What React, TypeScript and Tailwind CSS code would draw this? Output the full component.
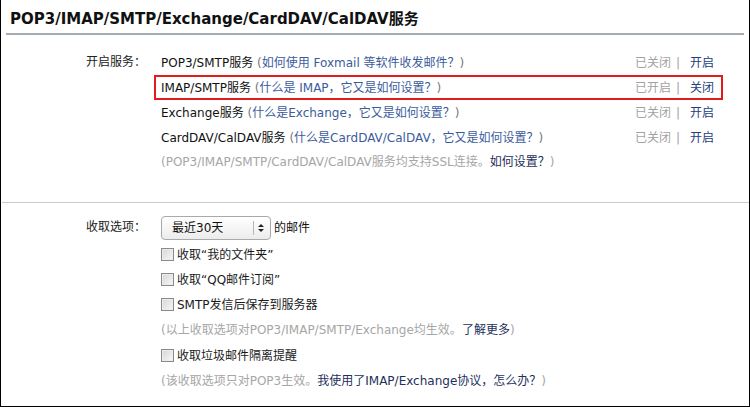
import React, { FC } from "react";

type Service = {
	name: string;
	help: string;
	on: boolean;
	active?: boolean;
};

const services: Service[] = [
	{ name: "POP3/SMTP服务", help: "如何使用 Foxmail 等软件收发邮件？", on: false },
	{ name: "IMAP/SMTP服务", help: "什么是 IMAP，它又是如何设置？", on: true, active: true },
	{ name: "Exchange服务", help: "什么是Exchange，它又是如何设置？", on: false },
	{ name: "CardDAV/CalDAV服务", help: "什么是CardDAV/CalDAV，它又是如何设置？", on: false },
];

const font = "font-['DejaVu_Sans','Noto_Sans_CJK_SC',sans-serif]";

const CheckBox: FC<{ label: string }> = ({ label }) => (
	<label className="flex h-[25px] items-center gap-[3px] text-[12px] text-[#1a1a1a]">
		<span className="h-[13px] w-[13px] border border-[#8a8a8a] bg-gradient-to-br from-[#d6d6d6] to-[#f8f8f8] shadow-[inset_0_0_0_1px_#ececec]" />
		{label}
	</label>
);

const App: FC = () => {
	return (
		<div className={`${font} h-[407px] w-[750px] border-r border-b border-l border-black bg-white`}>
			<div className="mx-[5px] h-[35px] border-b-2 border-[#a4abb3] pt-[10px] pl-[4px]">
				<h1 className="text-[15px] leading-[18px] font-bold text-[#111]">
					POP3/IMAP/SMTP/Exchange/CardDAV/CalDAV服务
				</h1>
			</div>

			<div className="flex pt-[15px] pb-[27px]">
				<div className="w-[153px] shrink-0 pl-[85px] text-[12px] leading-[25px] text-[#222]">
					开启服务：
				</div>
				<div className="flex w-[569px] flex-col">
					{services.map((s) => (
						<div
							key={s.name}
							className={`flex h-[25px] items-center justify-between border-2 pr-[7px] pl-[5px] text-[12px] ${
								s.active ? "border-[#e41b1b]" : "border-transparent"
							}`}
						>
							<span className="text-[#111]">
								{s.name} <span className="text-[#777]">(</span>
								<a className="text-[#3b5c9c]">{s.help}</a>
								<span className="text-[#777]">)</span>
							</span>
							<span className="text-[#a2a2a2]">
								{s.on ? "已开启" : "已关闭"}
								<span className="mr-[10px] ml-[5px]">|</span>
								<a className="text-[#23407a]">{s.on ? "关闭" : "开启"}</a>
							</span>
						</div>
					))}
					<div className="h-[25px] px-[7px] text-[12px] leading-[25px] text-[#a6a6a6]">
						(POP3/IMAP/SMTP/CardDAV/CalDAV服务均支持SSL连接。
						<a className="text-[#1e2f5c]">如何设置？</a>)
					</div>
				</div>
			</div>

			<div className="ml-[1px] border-t border-[#c4cbd1]" />

			<div className="flex pt-[10px]">
				<div className="w-[160px] shrink-0 pl-[85px] text-[12px] leading-[29px] text-[#222]">
					收取选项：
				</div>
				<div className="flex flex-col">
					<div className="flex h-[29px] items-center gap-[3px] text-[12px] text-[#111]">
						<div className="flex h-[24px] w-[110px] items-center rounded-[4px] border border-[#a9a9a9] bg-gradient-to-b from-[#ffffff] to-[#ececec] pl-[10px]">
							<span className="flex-1">最近30天</span>
							<span className="h-[14px] border-l border-[#b5b5b5]" />
							<svg width="14" height="12" viewBox="0 0 14 12" className="mr-[2px]">
								<path d="M4 5 L7 2 L10 5 Z" fill="#222" />
								<path d="M4 7 L7 10 L10 7 Z" fill="#222" />
							</svg>
						</div>
						<span>的邮件</span>
					</div>
					<CheckBox label="收取“我的文件夹”" />
					<CheckBox label="收取“QQ邮件订阅”" />
					<CheckBox label="SMTP发信后保存到服务器" />
					<div className="h-[26px] text-[12px] leading-[26px] text-[#a6a6a6]">
						(以上收取选项对POP3/IMAP/SMTP/Exchange均生效。
						<a className="text-[#1e2f5c]">了解更多</a>)
					</div>
					<CheckBox label="收取垃圾邮件隔离提醒" />
					<div className="h-[26px] text-[12px] leading-[26px] text-[#a6a6a6]">
						(该收取选项只对POP3生效。
						<a className="text-[#1e2f5c]">我使用了IMAP/Exchange协议，怎么办？</a>)
					</div>
				</div>
			</div>
		</div>
	);
};

export default App;
